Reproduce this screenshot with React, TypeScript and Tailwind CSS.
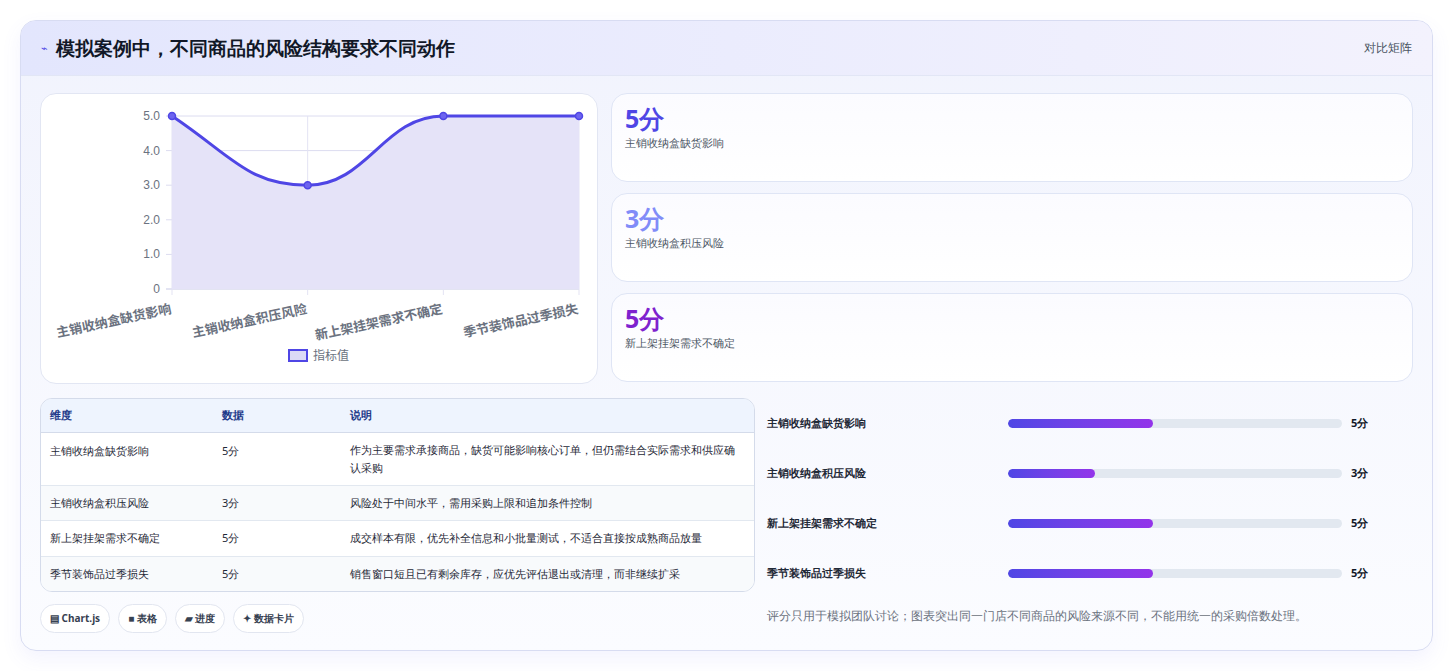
import React from 'react';

const rows = [
  { name: '主销收纳盒缺货影响', score: 5, note: '作为主要需求承接商品，缺货可能影响核心订单，但仍需结合实际需求和供应确认采购' },
  { name: '主销收纳盒积压风险', score: 3, note: '风险处于中间水平，需用采购上限和追加条件控制' },
  { name: '新上架挂架需求不确定', score: 5, note: '成交样本有限，优先补全信息和小批量测试，不适合直接按成熟商品放量' },
  { name: '季节装饰品过季损失', score: 5, note: '销售窗口短且已有剩余库存，应优先评估退出或清理，而非继续扩采' },
];

const Chart = () => {
  const x0 = 131, x1 = 538, yTop = 22, yBot = 195;
  const xs = [0, 1, 2, 3].map(i => x0 + (i * (x1 - x0)) / 3);
  const y = (v: number) => yBot - (v / 5) * (yBot - yTop);
  const pts = rows.map((r, i) => [xs[i], y(r.score)]);
  const line = `M${pts[0][0]},${pts[0][1]} C${pts[0][0] + 60},${pts[0][1] + 40} ${pts[1][0] - 60},${pts[1][1]} ${pts[1][0]},${pts[1][1]} C${pts[1][0] + 60},${pts[1][1]} ${pts[2][0] - 60},${pts[2][1]} ${pts[2][0]},${pts[2][1]} L${pts[3][0]},${pts[3][1]}`;
  return (
    <svg width="556" height="288" className="block">
      {[0, 1, 2, 3, 4, 5].map(v => (
        <g key={v}>
          <line x1={x0 - 6} x2={x1} y1={y(v)} y2={y(v)} stroke={v === 0 ? '#c7c9e6' : '#dcdcf0'} />
          <text x={x0 - 12} y={y(v) + 4} textAnchor="end" fontSize="12" fill="#6b7280" fontFamily="Liberation Sans, sans-serif">{v === 0 ? '0' : v.toFixed(1)}</text>
        </g>
      ))}
      {xs.map((x, i) => <line key={i} x1={x} x2={x} y1={yTop} y2={yBot + 6} stroke="#e3e3f3" />)}
      <path d={`${line} L${x1},${yBot} L${x0},${yBot} Z`} fill="#e5e3f8" />
      <path d={line} fill="none" stroke="#4f46e5" strokeWidth="3" />
      {pts.map((p, i) => <circle key={i} cx={p[0]} cy={p[1]} r="3.5" fill="#6d64ef" stroke="#4f46e5" strokeWidth="1.5" />)}
      {rows.map((r, i) => (
        <text key={i} x={xs[i]} y={yBot + 24} textAnchor="end" fontSize="13" fill="#6b7280" fontWeight="600"
          fontFamily="'Noto Sans CJK SC', sans-serif" transform={`rotate(-12 ${xs[i]} ${yBot + 24})`}>{r.name}</text>
      ))}
      <rect x="248" y="256" width="18" height="11" fill="#dcdaf6" stroke="#4f46e5" strokeWidth="2" />
      <text x="272" y="266" fontSize="12" fill="#6b7280" fontFamily="'Noto Sans CJK SC', sans-serif">指标值</text>
    </svg>
  );
};

export default function App() {
  const cards = [
    { v: '5分', c: 'text-[#4f46e5]', l: '主销收纳盒缺货影响' },
    { v: '3分', c: 'text-[#818cf8]', l: '主销收纳盒积压风险' },
    { v: '5分', c: 'text-[#7e22ce]', l: '新上架挂架需求不确定' },
  ];
  return (
    <div className="w-[1453px] h-[671px] bg-white pt-5 pl-5 font-['Noto_Sans_CJK_SC',sans-serif]">
      <div className="w-[1413px] h-[631px] rounded-2xl border border-[#d8dcf2] bg-gradient-to-b from-[#f1f3fd] to-[#fbfcff] overflow-hidden shadow-[0_8px_20px_rgba(99,102,241,0.08)]">
        <div className="h-[55px] flex items-center justify-between px-5 bg-gradient-to-r from-[#e3e6fd] to-[#f3f2fd] border-b border-[#e2e6f5]">
          <div className="flex items-center gap-2">
            <span className="text-[#4f46e5] text-[11px]">⌁</span>
            <h1 className="text-[19px] font-bold text-[#111827]">模拟案例中，不同商品的风险结构要求不同动作</h1>
          </div>
          <span className="text-[12px] text-[#4b5563]">对比矩阵</span>
        </div>
        <div className="px-[19px] pt-[17px]">
          <div className="flex gap-[13px]">
            <div className="w-[558px] h-[291px] bg-white rounded-2xl border border-[#e2e6f3] pt-[0px]">
              <Chart />
            </div>
            <div className="flex-1 flex flex-col gap-[11px]">
              {cards.map((c, i) => (
                <div key={i} className="h-[89px] rounded-2xl border border-[#dfe5f5] bg-gradient-to-b from-[#fbfbff] to-white px-[13px] pt-[6px]">
                  <div className={`text-[25px] font-bold leading-[36px] ${c.c}`}>{c.v}</div>
                  <div className="text-[11px] text-[#4b5563] mt-[-1px]">{c.l}</div>
                </div>
              ))}
            </div>
          </div>
          <div className="flex mt-[14px]">
            <div className="w-[715px]">
              <div className="rounded-xl border border-[#d4dbea] overflow-hidden bg-white">
                <table className="w-full text-[11px] text-[#1f2937]">
                  <thead>
                    <tr className="bg-[#eef4fe] text-[#1e3a8a] font-bold h-[33px] border-b border-[#d4dbea]">
                      <td className="pl-[9px] w-[181px]">维度</td><td className="w-[128px]">数据</td><td>说明</td>
                    </tr>
                  </thead>
                  <tbody>
                    {rows.map((r, i) => (
                      <tr key={i} className={`${i > 0 ? 'border-t border-[#e2e8f0]' : ''} ${i % 2 ? 'bg-[#f8fafc]' : 'bg-white'} align-top`}>
                        <td className={`pl-[9px] ${i === 0 ? 'pt-[10px]' : 'py-[9px]'}`}>{r.name}</td>
                        <td className={i === 0 ? 'pt-[10px]' : 'py-[9px]'}>{r.score}分</td>
                        <td className="pr-4 leading-[18px] py-[8px]">{r.note}</td>
                      </tr>
                    ))}
                  </tbody>
                </table>
              </div>
              <div className="flex gap-[8px] mt-[12px]">
                {['▤ Chart.js', '■ 表格', '▰ 进度', '✦ 数据卡片'].map(t => (
                  <span key={t} className="h-[29px] px-[9px] rounded-full border border-[#e2e6f0] bg-white text-[10px] font-bold text-[#374151] flex items-center">{t}</span>
                ))}
              </div>
            </div>
            <div className="flex-1 pl-[12px]">
              {rows.map((r, i) => (
                <div key={i} className="h-[50px] flex items-center">
                  <span className="w-[241px] text-[11px] font-bold text-[#1f2937]">{r.name}</span>
                  <div className="w-[334px] h-[9px] rounded-full bg-[#e2e8f0] overflow-hidden">
                    <div className="h-full rounded-full bg-gradient-to-r from-[#4f46e5] to-[#9333ea]" style={{ width: `${(r.score / 5) * 43.5}%` }} />
                  </div>
                  <span className="ml-[9px] text-[11px] font-bold text-[#111827]">{r.score}分</span>
                </div>
              ))}
              <p className="mt-[9px] text-[12px] text-[#6b7280] font-medium">评分只用于模拟团队讨论；图表突出同一门店不同商品的风险来源不同，不能用统一的采购倍数处理。</p>
            </div>
          </div>
        </div>
      </div>
    </div>
  );
}
